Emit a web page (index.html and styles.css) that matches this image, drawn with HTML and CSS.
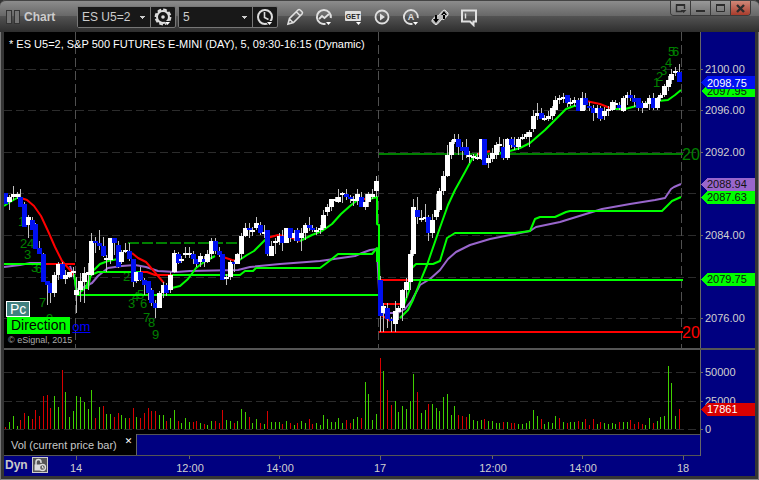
FILE: index.html
```html
<!DOCTYPE html>
<html lang="en">
<head>
    <meta charset="UTF-8">
    <meta name="viewport" content="width=device-width, initial-scale=1.0">
    <title>Chart - ES U5=2</title>
    <link rel="stylesheet" href="styles.css">
</head>
<body>
    <div class="window">
        <!-- Title bar and toolbar -->
        <header class="titlebar">
            <span class="grip"><i></i><i></i></span>
            <h1>Chart</h1>
            <div class="group symbol-group">
                <select class="symbol" aria-label="Symbol"><option>ES U5=2</option></select>
                <button class="tool boxed" aria-label="Settings">
                    <svg viewBox="0 0 24 20" width="24" height="20">
                        <circle cx="12" cy="10" r="6" fill="none" stroke="#ddd" stroke-width="2"/>
                        <circle cx="12" cy="10" r="7.4" fill="none" stroke="#ddd" stroke-width="2" stroke-dasharray="3.8 2"/>
                        <circle cx="12" cy="10" r="1.8" fill="#ddd"/>
                        <path d="M13 14h8l-4 5z" fill="#181818"/><path d="M14 15h5l-2.500 3z" fill="#fff"/>
                    </svg>
                </button>
            </div>
            <div class="group interval-group">
                <select class="interval" aria-label="Interval"><option>5</option></select>
                <button class="tool boxed" aria-label="Time template">
                    <svg viewBox="0 0 24 20" width="24" height="20">
                        <circle cx="12" cy="10" r="7" fill="none" stroke="#ddd" stroke-width="2"/>
                        <path d="M11.500 5v5.500l4 2" fill="none" stroke="#ddd" stroke-width="1.6"/>
                        <path d="M12 14h9l-4 6z" fill="#181818"/><path d="M14 15h5l-2.500 3z" fill="#fff"/>
                    </svg>
                </button>
            </div>
            <nav class="tools">
                <button class="tool" aria-label="Draw">
                    <svg viewBox="0 0 20 20" width="20" height="20">
                        <path d="M3 17l1.500-5.500L13 3q1-1 2.200 0L17 4.800q1 1 0 2.200l-8.500 8.500zM11.500 5l3.500 3.500M4.500 12l3.500 3.500" fill="none" stroke="#e0e0e0" stroke-width="1.6"/>
                    </svg>
                </button>
                <button class="tool" aria-label="Studies">
                    <svg viewBox="0 0 20 20" width="20" height="20">
                        <path d="M11.500 16.800A7 7 0 1 1 16.800 11" fill="none" stroke="#e0e0e0" stroke-width="2"/>
                        <path d="M5 12l3-3 2.500 2L15 7" fill="none" stroke="#e0e0e0" stroke-width="1.8"/>
                        <path d="M12 15h5l-2.500 3z" fill="#fff"/>
                    </svg>
                </button>
                <button class="tool" aria-label="GET studies">
                    <svg viewBox="0 0 20 20" width="20" height="20">
                        <rect x="2" y="4" width="16" height="10" rx="1" fill="#dedede"/>
                        <text x="10" y="12" class="get-text">GET</text>
                        <path d="M12 14h7l-3 5z" fill="#444"/><path d="M13 15h5l-2.500 3z" fill="#fff"/>
                    </svg>
                </button>
                <button class="tool" aria-label="Play">
                    <svg viewBox="0 0 20 20" width="20" height="20">
                        <circle cx="10" cy="10" r="6.500" fill="none" stroke="#e0e0e0" stroke-width="1.8"/>
                        <path d="M8 6.500l5 3.500-5 3.500z" fill="#e0e0e0"/>
                    </svg>
                </button>
                <button class="tool" aria-label="Alerts">
                    <svg viewBox="0 0 20 20" width="20" height="20">
                        <path d="M11.500 16.800A7 7 0 1 1 16.800 11" fill="none" stroke="#e0e0e0" stroke-width="1.8"/>
                        <text x="10" y="13" class="a-text">A</text>
                        <path d="M12 15h5l-2.500 3z" fill="#fff"/>
                    </svg>
                </button>
                <button class="tool" aria-label="Link">
                    <svg viewBox="0 0 20 20" width="20" height="20">
                        <path d="M2 13l4-4.500 2 .5 5-5.500 2-.5 3 3v2l-4 4.500-2-.5-5 5.500H5l-3-3z" fill="#bbb" stroke="#e0e0e0"/>
                        <path d="M3 12h6l-3 4zM5 8h2v5H5zM11 8h6l-3-4zM13 7h2v5h-2z" fill="#000"/>
                    </svg>
                </button>
                <button class="tool" aria-label="Note">
                    <svg viewBox="0 0 20 20" width="20" height="20">
                        <path d="M3 3.500h14v11h-2.500V18L11 14.500H3z" fill="none" stroke="#e0e0e0" stroke-width="2"/>
                        <path d="M6.500 6.500v5" stroke="#e0e0e0" stroke-width="1.400"/>
                    </svg>
                </button>
            </nav>
            <div class="win-buttons">
                <button aria-label="Menu"><svg viewBox="0 0 19 14" width="19" height="14"><path d="M11 10.500H5.500V4h8v4" fill="none" stroke="#2c2c2c" stroke-width="1.400"/><path d="M5 4h9" stroke="#2c2c2c" stroke-width="2"/><path d="M9.500 9h6l-3 3z" fill="#2c2c2c"/></svg></button>
                <button aria-label="Minimize"><svg viewBox="0 0 19 14" width="19" height="14"><path d="M5 10h9" stroke="#2c2c2c" stroke-width="2"/></svg></button>
                <button aria-label="Maximize"><svg viewBox="0 0 19 14" width="19" height="14"><path d="M5.500 4h8v6.500h-8z" fill="none" stroke="#2c2c2c"/><path d="M5 4h9" stroke="#2c2c2c" stroke-width="2"/></svg></button>
                <button class="close" aria-label="Close"><svg viewBox="0 0 19 14" width="19" height="14"><path d="M6 4l7 7M13 4l-7 7" stroke="#2c2c2c" stroke-width="2.400"/></svg></button>
            </div>
        </header>

        <!-- Chart panes -->
        <main class="chart">
            <section class="price-pane">
                <svg class="plot" id="pricePlot" viewBox="4 32 696 316">
                    <path class="grid-h" d="M4 69.500H700M4 110.500H700M4 152.500H700M4 193.500H700M4 235.500H700M4 277.500H700M4 318.500H700"/>
                    <path class="grid-v" d="M75.500 32V348M378.500 32V348M681.500 32V348"/>
                    <g class="wave">
                        <text x="18" y="226">1</text><text x="20" y="248">2</text><text x="27" y="248">4</text><text x="24" y="259">3</text>
                        <text x="31" y="272">3</text><text x="35" y="273">6</text><text x="39" y="307">7</text><text x="46" y="323">9</text>
                        <text x="123" y="281">2</text><text x="128" y="308">3</text><text x="132" y="301">4</text><text x="137" y="299">5</text>
                        <text x="140" y="308">6</text><text x="143" y="322">7</text><text x="148" y="327">8</text><text x="152" y="339">9</text>
                        <text x="653" y="87">1</text><text x="656" y="81">2</text><text x="660" y="75">3</text><text x="665" y="67">4</text>
                        <text x="668" y="56">5</text><text x="672" y="56">6</text>
                    </g>
                    <path class="line dark" d="M379 154H683"/>
                    <path class="line dark" stroke-dasharray="11 3" d="M128 243H240"/>
                    <path class="line vwap" d="M4 267L20 265 30 263H45M70 266L75 280 76 290 84 287 92 283 98 276 108 268 122 266 135 265 146 267 158 271 176 272 190 271 238 270 250 267 280 264 320 261 355 256 362 253 370 250 377 249 379 290M383 313H398L405 309 412 300 420 285 430 279 440 270 448 259 456 252 470 245 490 239 515 234 530 231 536 227 560 222 602 209 630 204 655 200 665 198 671 189 674 187 681 184"/>
                    <path class="line red" d="M46 264H75M140 272L147 272 155 275H172M145 295H158M379 280H410M379 304H404M379 332H683"/>
                    <path class="line green" d="M4 264H46M76 295H378M410 280H683"/>
                    <path class="line green" d="M75 280L77 295 86 287 91 275 98 272H140M172 275H240L245 271H253L256 268H320L328 262 338 254H372L377 248 377 262M379 264L380 310M404 305L409 291 412 268 416 264H433L440 261 447 238 455 233H515L530 231 535 219 540 217H555L566 212 570 211H662L672 201 681 197"/>
                    <path class="line red" d="M21 198L27 200 34 206 41 216 48 231 55 247 62 261 70 270 73 275M132 253L138 258 146 262 152 269 158 276 164 283M223 257L232 260 237 261M267 238L278 235 290 237 300 241M360 199H370M381 315L390 321M478 154L490 151M586 101L600 104 610 108"/>
                    <path class="line green" d="M4 206L10 202 17 198H21M74 274L77 293M84 288H88L91 273 100 264 108 261 118 259M172 288L180 286 188 279 196 268 204 262 215 256M238 261L241 259 247 255 254 251 260 245 267 238M300 241L312 235 322 231 332 224 341 214 350 206 360 198M370 199L377 197 377 224 379 225 379 280M400 318L408 310 413 300 420 282 427 265 437 236 448 205 455 190 465 172 472 159 478 154M500 153L510 151 520 148 530 143 545 130 555 120 566 109 574 106 582 106M612 109H625L640 105 658 101 668 100 675 95 681 90"/>
                    <g id="candles"></g>
                    <text class="level dark-text" x="682" y="160">20</text>
                    <text class="level red-text" x="682" y="338">20</text>
                    <text class="heading" x="9" y="48">* ES U5=2, S&amp;P 500 FUTURES E-MINI (DAY), 5, 09:30-16:15 (Dynamic)</text>
                    <text class="copyright" x="8" y="343">© eSignal, 2015</text>
                </svg>
                <div class="badges">
                    <span class="badge-pc">Pc</span>
                    <div class="badge-row"><span class="badge-direction">Direction</span><a href="#">om</a></div>
                </div>
            </section>
            <section class="axis">
                <svg class="plot" viewBox="700 32 55 316">
                    <path class="tick" d="M700 69.500h3M700 110.500h3M700 152.500h3M700 235.500h3M700 318.500h3"/>
                    <g class="scale">
                        <text x="705" y="73">2100.00</text><text x="705" y="114">2096.00</text><text x="705" y="156">2092.00</text>
                        <text x="705" y="239">2084.00</text><text x="705" y="322">2076.00</text>
                    </g>
                    <path fill="#00ff00" d="M701 91l6-6h48v12h-48z"/><text class="tag-dark" x="707" y="95">2097.95</text>
                    <path fill="#0010f0" d="M701 83l6-7h48v13h-48z"/><text class="tag-light" x="707" y="87">2098.75</text>
                    <path fill="#9966cc" d="M701 184l6-6h48v13h-48z"/><text class="tag-dark" x="707" y="188">2088.94</text>
                    <path fill="#00ff00" d="M701 197l6-6h48v13h-48z"/><text class="tag-dark" x="707" y="201">2087.63</text>
                    <path fill="#00ff00" d="M701 279l6-6h48v13h-48z"/><text class="tag-dark" x="707" y="283">2079.75</text>
                </svg>
            </section>
            <div class="divider"></div>
            <section class="volume-pane">
                <svg class="plot" viewBox="4 350 696 84">
                    <path class="grid-h" d="M4 372.500H700M4 401.500H700M4 429.500H700"/>
                    <g id="volume"></g>
                </svg>
            </section>
            <section class="axis">
                <svg class="plot" viewBox="700 350 55 84">
                    <path class="tick" d="M700 372.500h3M700 401.500h3M700 429.500h3"/>
                    <g class="scale"><text x="705" y="376">50000</text><text x="705" y="405">25000</text><text x="705" y="433">0</text></g>
                    <path fill="#d80000" d="M701 409l6-6h48v13h-48z"/><text class="tag-light" x="707" y="413">17861</text>
                </svg>
            </section>
            <div class="tab-row">
                <div class="tab">Vol (current price bar)<button aria-label="Close tab">✕</button></div>
            </div>
            <div class="tab-end"></div>
            <footer class="time-row">
                <svg class="plot" viewBox="4 456 751 20">
                    <path class="tick" d="M76.500 456v4M189.500 456v3M279.500 456v3M380.500 456v4M492.500 456v3M582.500 456v3M683.500 456v4"/>
                    <g class="scale middle">
                        <text x="76" y="472">14</text><text x="190" y="472">12:00</text><text x="280" y="472">14:00</text>
                        <text x="380" y="472">17</text><text x="493" y="472">12:00</text><text x="583" y="472">14:00</text><text x="683" y="472">18</text>
                    </g>
                </svg>
                <div class="dyn">
                    <span>Dyn</span>
                    <button aria-label="Lock time axis">
                        <svg viewBox="0 0 14 14" width="14" height="14">
                            <path d="M3 7V4a2.500 2.500 0 0 1 5 0v1" fill="none" stroke="#ddd" stroke-width="1.500"/>
                            <path d="M1.500 6.500h6v6h-6z" fill="#ddd"/>
                            <circle cx="9.500" cy="9.500" r="3" fill="#666" stroke="#ddd" stroke-width="1.300"/>
                            <path d="M9.500 8v2h1.500" fill="none" stroke="#ddd"/>
                        </svg>
                    </button>
                </div>
            </footer>
        </main>
    </div>
    <script src="chart.js"></script>
</body>
</html>
```
FILE: styles.css
```css
* {
    box-sizing: border-box;
}
body {
    margin: 0;
    background: #333;
    font-family: "Liberation Sans", Arial, sans-serif;
    font-size: 11px;
    color: #c8c8c8;
}
button, select {
    margin: 0;
    padding: 0;
    border: none;
    background: none;
    font: inherit;
    color: inherit;
}
svg {
    display: block;
}
.window {
    display: flex;
    flex-direction: column;
    height: 100vh;
    padding: 0 4px 4px;
    background: #353535;
    box-shadow: inset 1px 0 #777, inset -1px 0 #777, inset 0 -1px #888;
    border-radius: 6px 6px 0 0;
}
/* title bar */
.titlebar {
    display: flex;
    align-items: center;
    height: 32px;
    margin: 0 -4px;
    padding: 0 8px 0 6px;
    border-top: 1px solid #444;
    border-radius: 6px 6px 0 0;
    background: linear-gradient(#8c8c8c, #666 50%, #525252 50%, #2e2e2e);
}
.grip {
    display: flex;
    gap: 2px;
    margin-right: 4px;
}
.grip i {
    width: 6px;
    height: 14px;
    border: 1px solid #333;
    background: #757575;
}
h1 {
    width: 53px;
    margin: 0;
    font-size: 12px;
    line-height: 16px;
    color: #ccc;
}
.group {
    display: flex;
    height: 22px;
    margin-right: 2px;
    border: 1px solid #777;
    border-radius: 2px;
    background: #181818;
}
.group select {
    appearance: none;
    padding: 0 4px;
    font-size: 12px;
    color: #ccc;
    background: linear-gradient(#ccc, #ccc) right 5px top 9px / 5px 1px no-repeat,
        linear-gradient(#ccc, #ccc) right 6px top 10px / 3px 1px no-repeat,
        linear-gradient(#ccc, #ccc) right 7px top 11px / 1px 1px no-repeat, #181818;
}
.symbol {
    width: 72px;
}
.interval {
    width: 73px;
}
.boxed {
    width: 25px;
    border-left: 1px solid #777;
}
.tools {
    display: flex;
}
.tools .tool {
    display: grid;
    place-items: center;
    width: 29px;
    height: 24px;
}
.get-text, .a-text {
    font-size: 7px;
    font-weight: bold;
    text-anchor: middle;
    fill: #222;
}
.a-text {
    font-size: 9px;
    fill: #e0e0e0;
}
.win-buttons {
    display: flex;
    align-self: flex-start;
    margin-left: auto;
    border: 1px solid #3a3a3a;
    border-top: none;
    border-radius: 0 0 4px 4px;
    overflow: hidden;
}
.win-buttons button {
    background: linear-gradient(#999, #707070);
}
.win-buttons button + button {
    border-left: 1px solid #3a3a3a;
}
.win-buttons .close {
    background: linear-gradient(#d08878, #a83c2c);
}
/* chart panes */
.chart {
    flex: 1;
    display: grid;
    grid-template-columns: 1fr 55px;
    grid-template-rows: minmax(0, 316fr) 2px minmax(0, 84fr) 22px 20px;
    min-height: 0;
    background: #000;
}
.plot {
    width: 100%;
    height: 100%;
    shape-rendering: crispEdges;
}
.price-pane {
    position: relative;
}
.axis, .tab-end {
    background: #000080;
    box-shadow: inset 1px 0 #666;
}
.divider {
    grid-column: 1 / 3;
    background: #555;
}
.grid-h, .grid-v, .line, .tick {
    fill: none;
}
.grid-h {
    stroke: #2c2c2c;
    stroke-dasharray: 8 4;
}
.grid-v {
    stroke: #505050;
    stroke-dasharray: 9 4;
}
.tick {
    stroke: #666;
}
.line {
    stroke-width: 2;
    stroke-linejoin: round;
    shape-rendering: geometricPrecision;
}
.green {
    stroke: #00ff00;
}
.red {
    stroke: #ff0000;
}
.dark {
    stroke: #008000;
}
.vwap {
    stroke: #9966cc;
}
.wave {
    font-size: 13px;
    fill: #008000;
}
.level {
    font-size: 16px;
}
.dark-text {
    fill: #008000;
}
.red-text {
    fill: #ff0000;
}
.heading {
    fill: #fff;
}
.copyright {
    font-size: 9px;
    fill: #aaa;
}
.scale {
    fill: #d0d0d0;
}
.middle {
    text-anchor: middle;
}
.tag-dark {
    fill: #111;
}
.tag-light {
    fill: #fff;
}
/* study badges over the price pane */
.badges {
    position: absolute;
    left: 2px;
    bottom: 14px;
    display: flex;
    flex-direction: column;
    align-items: flex-start;
    font-size: 14px;
    line-height: 14px;
}
.badge-pc {
    padding: 0 3px;
    border: 1px solid #fff;
    background: #408080;
    color: #fff;
}
.badge-row {
    display: flex;
    padding-left: 1px;
}
.badge-direction {
    padding: 1px 4px;
    background: #00ff00;
    color: #000;
}
.badge-row a {
    margin-left: 2px;
    padding-top: 3px;
    font-size: 13px;
    line-height: 14px;
    color: #0000ff;
}
/* study tab and time axis */
.tab-row {
    display: flex;
    border-top: 1px solid #555;
    border-bottom: 1px solid #555;
    background: #000080;
}
.tab {
    display: flex;
    align-items: center;
    width: 133px;
    margin-top: -1px;
    padding-left: 7px;
    border-right: 1px solid #666;
    background: #000;
}
.tab button {
    align-self: flex-start;
    margin-left: 8px;
    font-family: "DejaVu Sans", sans-serif;
    font-size: 9px;
    line-height: 14px;
    color: #fff;
}
.time-row {
    grid-column: 1 / 3;
    position: relative;
    background: #000080;
}
.dyn {
    position: absolute;
    left: 1px;
    top: 1px;
    display: flex;
    align-items: center;
    gap: 4px;
    font-size: 12px;
    font-weight: bold;
}
.dyn button {
    border: 1px solid #ccc;
    background: #555;
}
```
FILE: chart.js
```js
// x position of bar i
function barX(i) {
    return Math.floor(5.9 + 3.742 * i);
}

function addRect(parent, x, y, width, height, fill) {
    const rect = document.createElementNS('http://www.w3.org/2000/svg', 'rect');
    rect.setAttribute('x', x);
    rect.setAttribute('y', y);
    rect.setAttribute('width', width);
    rect.setAttribute('height', height);
    rect.setAttribute('fill', fill);
    parent.appendChild(rect);
}

// direction, high, body top, body bottom, low
const candles = `
b,193,193,204,204 w,195,197,202,210 w,186,194,197,200 w,192,194,197,199 b,189,197,207,207
b,202,204,227,227 w,215,217,225,238 b,217,220,230,230 b,223,224,249,249 b,241,248,254,254
b,253,254,282,282 b,281,281,285,305 b,283,283,293,303 w,272,275,293,297 w,262,264,275,280
b,262,264,279,279 w,270,275,279,284 w,272,272,277,278 w,267,271,273,277 w,277,290,295,313
w,273,281,290,302 w,267,273,282,303 w,263,272,275,290 w,233,241,275,276 b,237,241,243,253
b,230,243,246,250 b,237,246,256,257 w,255,258,260,272 w,238,238,260,264 b,238,238,243,255
b,241,245,267,268 w,250,252,262,264 w,243,250,252,253 b,243,251,259,261 b,259,259,282,287
w,272,272,281,283 b,267,272,280,281 b,278,280,285,295 b,281,281,293,300 b,288,290,303,306
b,300,303,308,318 w,291,293,308,308 w,282,285,293,298 b,283,285,293,296 w,272,275,290,293
w,250,253,272,273 b,252,254,263,264 w,256,259,261,263 w,247,253,255,258 w,247,253,255,258
b,251,254,259,264 b,259,259,264,267 w,253,256,262,267 b,256,259,262,267 w,250,254,262,263
w,238,241,254,259 b,238,241,251,254 b,247,251,255,257 b,254,254,280,280 w,274,277,279,285
w,260,262,277,280 b,260,262,264,272 w,253,254,264,264 w,233,236,254,259 w,223,228,236,237
b,223,228,230,238 w,227,230,232,236 w,217,223,228,230 b,222,225,233,235 w,225,232,234,238
b,230,230,254,256 w,241,246,256,256 w,238,241,243,254 w,233,236,242,245 b,230,236,243,251
w,228,228,243,243 b,228,228,238,242 w,230,233,238,241 b,228,230,241,243 w,228,233,238,251
w,223,225,233,240 b,217,225,228,231 b,225,228,230,232 w,227,230,232,235 w,225,228,230,234
w,210,215,228,230 w,204,207,212,216 w,199,199,207,211 w,197,199,201,202 w,189,197,202,203
w,192,193,195,203 b,189,194,197,200 b,195,197,199,203 w,196,199,201,206 w,189,194,201,205
b,192,197,207,207 w,194,202,207,210 w,192,194,202,207 w,189,194,197,199 w,176,181,191,197
b,276,280,316,332 w,303,306,313,332 b,303,308,319,328 b,317,319,321,332 w,301,311,324,332
w,306,308,312,320 w,289,290,308,321 w,278,282,290,298 w,250,254,282,290 w,199,207,254,256
b,197,210,217,224 w,210,218,220,222 w,204,217,219,222 b,215,217,233,241 w,214,220,233,238
w,194,210,217,220 w,188,191,210,212 w,171,176,191,195 w,145,155,176,177 w,140,142,155,159
w,134,139,142,144 b,134,139,147,155 b,142,147,151,160 b,139,147,155,158 w,151,155,157,163
w,154,156,158,161 w,153,157,159,160 w,139,139,159,160 b,139,139,165,165 w,155,158,163,168
w,148,153,159,162 w,142,145,155,159 w,137,144,146,152 b,139,147,158,160 w,138,139,158,160
b,137,139,145,148 b,137,145,147,150 w,137,139,147,150 w,134,137,139,140 w,132,134,137,139
w,130,132,137,147 w,110,116,129,132 w,103,113,116,120 b,108,113,119,119 w,115,118,120,121
w,111,116,119,121 w,106,108,116,120 w,96,100,110,114 w,95,98,100,104 w,93,97,99,103
b,95,95,103,107 w,98,102,104,106 w,97,100,103,106 b,98,100,111,111 w,92,98,111,111
b,93,98,105,110 b,102,106,108,111 b,105,108,113,121 w,105,108,113,118 b,106,108,119,121
w,107,111,116,120 w,106,109,111,116 w,100,102,110,111 w,100,103,105,109 b,102,105,108,110
w,96,98,111,112 w,92,95,98,105 b,90,95,98,101 b,95,98,102,107 b,98,98,108,111
b,101,103,108,113 w,101,103,108,108 w,95,98,104,110 b,93,98,108,110 w,97,98,108,110
w,93,95,98,101 w,84,86,95,97 w,76,80,87,91 w,69,74,80,84 w,67,71,73,76
b,64,72,82,82`.trim().split(/\s+/);

// + up bar, - down bar
const volume = [
    -2, 7, 13, 3, -9, -16, 13, -10, -19, -13, -33, -34, -21, 33, 22, -59, 37, 12, 18, 33,
    32, 27, 20, 39, -11, 22, -23, 15, 15, -12, -16, 14, 11, -11, -21, 12, -11, -16, -21, -18,
    -18, 14, 14, -8, 11, 19, -8, 6, 11, 7, -7, -8, 6, -5, 4, 8, -8, -6, -19, 9,
    8, -6, 8, 20, 17, -12, 6, 10, -6, 5, -18, 7, 7, 7, -5, 8, -6, 4, -6, 8,
    6, -10, -5, 6, 4, 14, 10, 7, 7, 11, 6, -9, -6, 10, 12, -11, 47, 35, 9, 15,
    -71, 58, -39, -24, 28, 17, 23, 20, 28, 55, -37, 16, 19, -25, 25, 21, 18, 32, 35, 14,
    23, -14, -13, -12, 15, 9, 8, 9, -10, 8, 8, 6, 6, -7, 7, -6, -6, 5, 5, 6,
    8, 19, 13, -10, 5, 7, 6, 13, -11, 7, -6, 7, 7, -8, 7, -10, -4, -10, 5, -7,
    6, 5, 6, 5, -7, 7, 7, -9, -5, -7, -5, 4, 11, -6, 8, 12, 13, 63, 46, 13,
    -20
];

const candleGroup = document.getElementById('candles');
candles.forEach((row, i) => {
    const [dir, high, top, bottom, low] = row.split(',');
    addRect(candleGroup, barX(i), +high, 1, low - high, '#c0c0c0');
    addRect(candleGroup, barX(i) - 2, +top, 5, bottom - top, dir === 'w' ? '#ffffff' : '#0010f0');
});

const volumeGroup = document.getElementById('volume');
volume.forEach((v, i) => {
    const h = Math.abs(v);
    addRect(volumeGroup, barX(i), 429 - h, 1, h, v > 0 ? '#40d000' : '#d80000');
});
```
